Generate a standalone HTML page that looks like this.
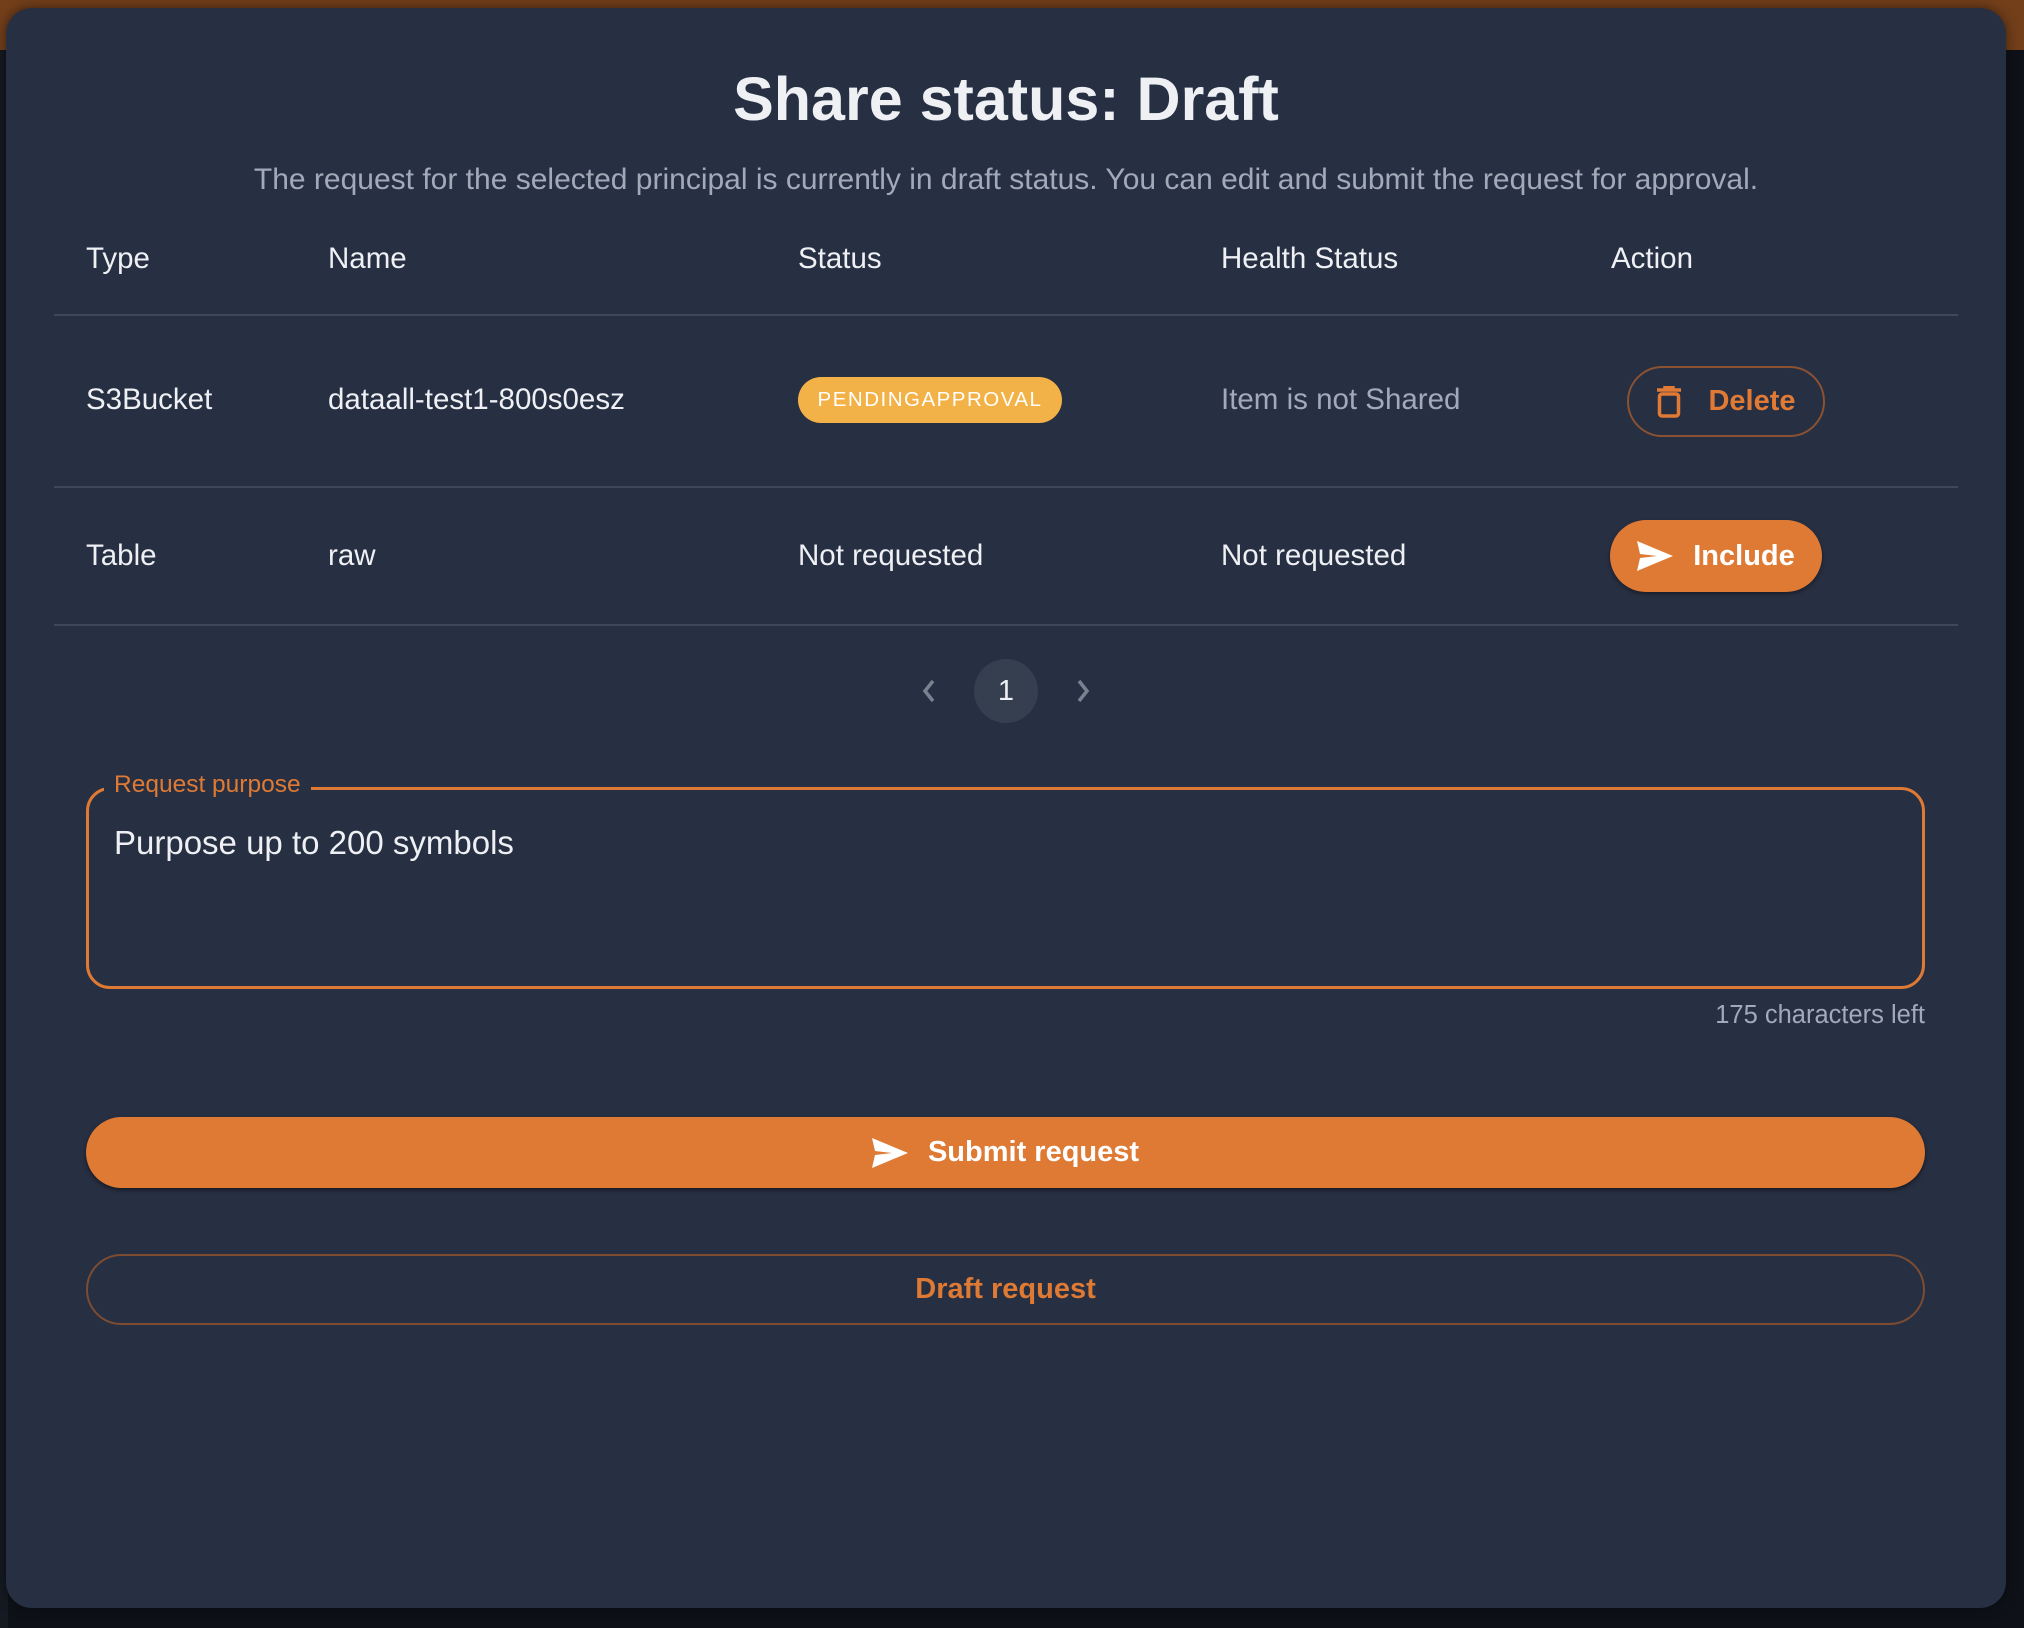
<!DOCTYPE html>
<html><head><meta charset="utf-8"><style>
*{margin:0;padding:0;box-sizing:border-box}
body{width:2024px;height:1628px;background:#0e1218;position:relative;overflow:hidden;font-family:"Liberation Sans",sans-serif}
.top{position:absolute;left:0;top:0;width:2024px;height:50px;background:#733f1a}
.side{position:absolute;left:0;top:50px;width:8px;height:1578px;background:#151a22}
.modal{position:absolute;left:6px;top:8px;width:2000px;height:1600px;background:#272f42;border-radius:26px;box-shadow:0 0 12px rgba(0,0,0,.5)}
.abs{position:absolute}
h1{position:absolute;left:0;width:2012px;top:64px;text-align:center;color:#eef0f4;font-size:61px;font-weight:bold}
.sub{left:0;width:2012px;top:163px;text-align:center;color:#a2aab9;font-size:30px}
.th{color:#eef0f4;font-size:29.5px;top:242px}
.line{left:54px;width:1904px;height:2px;background:#3e4859}
.td{color:#eef0f4;font-size:29.5px}
.chip{left:798px;top:377px;width:264px;height:46px;border-radius:23px;background:#f3b247;color:#fff;font-size:20.5px;letter-spacing:1.5px;text-align:center;line-height:46px}
.btn{display:flex;align-items:center;justify-content:center;font-weight:bold;font-size:29px;border-radius:40px}
</style></head><body>
<div class="top"></div><div class="side"></div>
<div class="modal"></div>
<h1>Share status: Draft</h1>
<div class="abs sub">The request for the selected principal is currently in draft status. You can edit and submit the request for approval.</div>
<div class="abs th" style="left:86px">Type</div>
<div class="abs th" style="left:328px">Name</div>
<div class="abs th" style="left:798px">Status</div>
<div class="abs th" style="left:1221px">Health Status</div>
<div class="abs th" style="left:1611px">Action</div>
<div class="abs line" style="top:314px"></div>
<div class="abs td" style="left:86px;top:383px">S3Bucket</div>
<div class="abs td" style="left:328px;top:383px">dataall-test1-800s0esz</div>
<div class="abs chip">PENDINGAPPROVAL</div>
<div class="abs td" style="left:1221px;top:383px;color:#a2aab9">Item is not Shared</div>
<div class="abs btn" style="left:1627px;top:366px;width:198px;height:71px;border:2px solid #8a5233;color:#e07a35">
<svg width="26" height="32" viewBox="0 0 26 32" style="margin-right:26px"><path d="M1 4h24M9 4V1h8v3" stroke="#e07a35" stroke-width="3.5" fill="none"/><rect x="3.5" y="8" width="19" height="22" rx="2.5" stroke="#e07a35" stroke-width="3.5" fill="none"/></svg>Delete</div>
<div class="abs line" style="top:486px"></div>
<div class="abs td" style="left:86px;top:539px">Table</div>
<div class="abs td" style="left:328px;top:539px">raw</div>
<div class="abs td" style="left:798px;top:539px">Not requested</div>
<div class="abs td" style="left:1221px;top:539px">Not requested</div>
<div class="abs btn" style="left:1610px;top:520px;width:212px;height:72px;background:#df7a35;color:#fff;box-shadow:0 2px 4px rgba(0,0,0,.4)">
<svg width="36" height="30" viewBox="0 0 36 30" style="margin-right:20px"><path d="M0 0L36 15L0 30L3 17L20 15L3 13Z" fill="#fff"/></svg>Include</div>
<div class="abs line" style="top:624px"></div>
<svg class="abs" style="left:920px;top:678px" width="18" height="26" viewBox="0 0 18 26"><path d="M13 3L5 13L13 23" stroke="#7a8291" stroke-width="3.5" fill="none"/></svg>
<div class="abs" style="left:974px;top:659px;width:64px;height:64px;border-radius:32px;background:#363f50;color:#eef0f4;font-size:29px;text-align:center;line-height:64px">1</div>
<svg class="abs" style="left:1074px;top:678px" width="18" height="26" viewBox="0 0 18 26"><path d="M5 3L13 13L5 23" stroke="#7a8291" stroke-width="3.5" fill="none"/></svg>
<div class="abs" style="left:86px;top:787px;width:1839px;height:202px;border:3px solid #df7a35;border-radius:24px"></div>
<div class="abs" style="left:104px;top:771px;padding:0 10px;background:#272f42;color:#df7a35;font-size:24.5px">Request purpose</div>
<div class="abs" style="left:114px;top:824px;color:#eef0f4;font-size:33px">Purpose up to 200 symbols</div>
<div class="abs" style="left:1500px;width:425px;text-align:right;top:1001px;color:#a2aab9;font-size:25.5px">175 characters left</div>
<div class="abs btn" style="left:86px;top:1117px;width:1839px;height:71px;background:#df7a35;color:#fff;box-shadow:0 2px 4px rgba(0,0,0,.5)">
<svg width="36" height="30" viewBox="0 0 36 30" style="margin-right:20px"><path d="M0 0L36 15L0 30L3 17L20 15L3 13Z" fill="#fff"/></svg>Submit request</div>
<div class="abs btn" style="left:86px;top:1254px;width:1839px;height:71px;border:2px solid #7d4c31;color:#df7a35">Draft request</div>
</body></html>
